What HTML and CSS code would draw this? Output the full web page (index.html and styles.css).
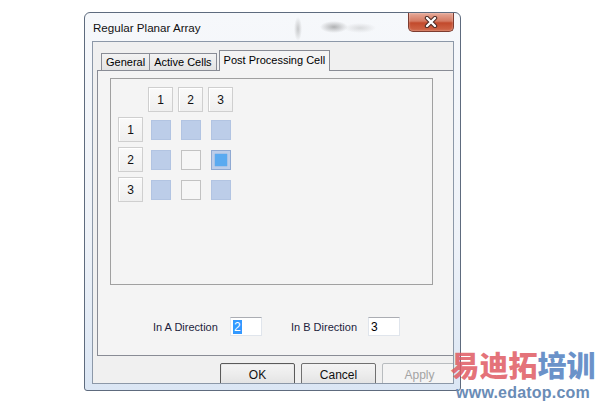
FILE: index.html
```html
<!DOCTYPE html>
<html lang="en">
<head>
  <meta charset="UTF-8">
  <title>Regular Planar Array</title>
  <link rel="stylesheet" href="styles.css">
</head>
<body>
  <div class="window">
    <div class="titlebar">
      <span class="title">Regular Planar Array</span>
      <button class="close-btn" aria-label="Close">
        <svg width="14" height="12" viewBox="0 0 14 12">
          <path d="M3 2 L11 10 M11 2 L3 10" stroke="#4a2a24" stroke-width="4.4" stroke-linecap="round"/>
          <path d="M3 2 L11 10 M11 2 L3 10" stroke="#fff" stroke-width="2.4" stroke-linecap="round"/>
        </svg>
      </button>
    </div>

    <div class="client">
      <!-- Tabs -->
      <div class="tabs">
        <div class="tab">General</div>
        <div class="tab">Active Cells</div>
        <div class="tab active">Post Processing Cell</div>
      </div>

      <div class="sheet">
        <div class="cell-frame">
          <div class="cell-grid">
            <div></div>
            <div class="hdr">1</div>
            <div class="hdr">2</div>
            <div class="hdr">3</div>

            <div class="hdr">1</div>
            <div class="cell on"></div>
            <div class="cell on"></div>
            <div class="cell on"></div>

            <div class="hdr">2</div>
            <div class="cell on"></div>
            <div class="cell"></div>
            <div class="cell on picked"><span class="dot"></span></div>

            <div class="hdr">3</div>
            <div class="cell on"></div>
            <div class="cell"></div>
            <div class="cell on"></div>
          </div>
        </div>

        <div class="dir-row">
          <label>In A Direction</label>
          <div class="field"><span class="sel">2</span></div>
          <label class="second">In B Direction</label>
          <div class="field">3</div>
        </div>
      </div>

      <div class="btn-row">
        <button class="btn default">OK</button>
        <button class="btn">Cancel</button>
        <button class="btn" disabled>Apply</button>
      </div>
    </div>
  </div>

  <div class="watermark">
    <div class="wm-cn"><span class="red">易迪拓</span><span class="blue">培训</span></div>
    <div class="wm-url">www.edatop.com</div>
  </div>
</body>
</html>
```

FILE: styles.css
```css
* {
  box-sizing: border-box;
}

body {
  margin: 0;
  background: #fff;
  font-family: "Liberation Sans", Arial, sans-serif;
  font-size: 11px;
  color: #000;
  position: relative;
  height: 401px;
  overflow: hidden;
}

/* Window frame */
.window {
  width: 377px;
  height: 379px;
  margin: 12px 0 0 84px;
  padding: 0 6px 6px 7px;
  border: 1px solid #5e6b7e;
  border-radius: 6px 6px 3px 3px;
  background: linear-gradient(#f6f8fb, #eef2f8 60%, #dbe6f4);
  display: flex;
  flex-direction: column;
}

.titlebar {
  height: 28px;
  display: flex;
  justify-content: space-between;
  align-items: flex-start;
  background:
    radial-gradient(ellipse 4px 12px at 206px 16px, rgba(110,110,110,.35), transparent),
    radial-gradient(ellipse 14px 6px at 242px 14px, rgba(90,90,90,.45), transparent),
    radial-gradient(ellipse 16px 5px at 268px 15px, rgba(150,150,150,.3), transparent);
}

.title {
  margin: 8px 0 0 1px;
  font-size: 11.6px;
  color: #111;
}

.close-btn {
  width: 46px;
  height: 19px;
  margin: 0;
  padding: 0;
  border: 1px solid #7d3c30;
  border-top: none;
  border-radius: 0 0 5px 5px;
  background: linear-gradient(#e6a898, #d47a62 45%, #c24a2c 55%, #d0684a);
  box-shadow: inset 0 0 2px rgba(255,255,255,.6);
  display: flex;
  align-items: center;
  justify-content: center;
}

/* Client area */
.client {
  width: 362px;
  height: 343px;
  border: 1px solid #8c98a8;
  background: #f0f0f0;
  overflow: hidden;
}

.tabs {
  display: flex;
  align-items: flex-end;
  height: 20px;
  margin: 8px 0 0 8px;
  position: relative;
  z-index: 1;
}

.tab {
  height: 17px;
  padding: 0 4px;
  line-height: 16px;
  border: 1px solid #898c95;
  border-bottom: none;
  background: linear-gradient(#f3f3f3, #ebebeb 50%, #e3e3e3);
  white-space: nowrap;
}

.tab + .tab {
  border-left: none;
}

.tab.active {
  width: 111px;
  height: 21px;
  margin-left: 2px;
  margin-bottom: -1px;
  border-left: 1px solid #898c95;
  background: #f4f4f4;
  text-align: center;
  line-height: 18px;
}

.sheet {
  width: 372px;
  height: 286px;
  margin-left: 4px;
  border: 1px solid #898c95;
  background: #f4f4f4;
  padding: 7px 0 0 12px;
}

.cell-frame {
  width: 323px;
  height: 207px;
  border: 1px solid #a0a0a0;
}

.cell-grid {
  display: grid;
  grid-template-columns: repeat(4, 25px);
  grid-auto-rows: 25px;
  gap: 5px;
  padding: 8px 0 0 7px;
}

.hdr {
  border: 1px solid #cfcfcf;
  background: linear-gradient(#fafafa, #efefef);
  box-shadow: inset 1px 1px 0 #fff;
  display: flex;
  align-items: center;
  justify-content: center;
  font-size: 12px;
  color: #111;
}

.cell {
  width: 20px;
  height: 20px;
  margin: 3px 0 0 3px;
  border: 1px solid #c2c2c2;
  background: #f6f6f6;
}

.cell.on {
  border-color: #b2c4e2;
  background: #bccde9;
}

.cell.picked {
  border-color: #8fa9d2;
  display: flex;
  align-items: center;
  justify-content: center;
}

.dot {
  width: 12px;
  height: 12px;
  background: #5aaaf0;
  box-shadow: 0 0 1px #3d8fe0;
}

.dir-row {
  display: flex;
  align-items: center;
  height: 19px;
  margin: 32px 0 0 43px;
  color: #1c1c3c;
}

.dir-row label {
  width: 77px;
}

.dir-row label.second {
  margin-left: 29px;
}

.field {
  width: 32px;
  height: 19px;
  border: 1px solid #e0e5ec;
  border-top-color: #abadb3;
  background: #fff;
  padding: 2px 0 0 2px;
  font-size: 12px;
  line-height: 14px;
  color: #000;
}

.sel {
  background: #3399ff;
  color: #fff;
  padding: 0 1px;
}

/* Dialog buttons */
.btn-row {
  display: flex;
  gap: 6px;
  margin: 7px 0 0 127px;
}

.btn {
  flex-shrink: 0;
  width: 75px;
  height: 23px;
  border: 1px solid #707070;
  border-radius: 2px;
  background: linear-gradient(#f4f4f4, #ececec 50%, #e2e2e2);
  font-family: inherit;
  font-size: 12px;
  color: #111;
  padding: 0;
}

.btn.default {
  border-color: #5a5a5a;
  box-shadow: inset 0 0 0 1px #e8e8e8;
}

.btn:disabled {
  border-color: #b8bcbf;
  background: #f4f4f4;
  color: #a3a3a3;
}

/* Watermark */
.watermark {
  position: absolute;
  left: 447px;
  top: 349px;
  width: 152px;
  text-align: center;
}

.wm-cn {
  font-family: "Noto Sans CJK SC", sans-serif;
  font-weight: 900;
  font-size: 29px;
  line-height: 31px;
}

.wm-cn .red {
  color: rgba(224, 90, 98, 0.85);
}

.wm-cn .blue {
  color: rgba(80, 126, 192, 0.85);
}

.wm-url {
  margin-top: 6px;
  font-family: "Liberation Sans", Arial, sans-serif;
  font-weight: bold;
  font-size: 16px;
  line-height: 13px;
  color: #6a8cb6;
  letter-spacing: 0.2px;
}
```
